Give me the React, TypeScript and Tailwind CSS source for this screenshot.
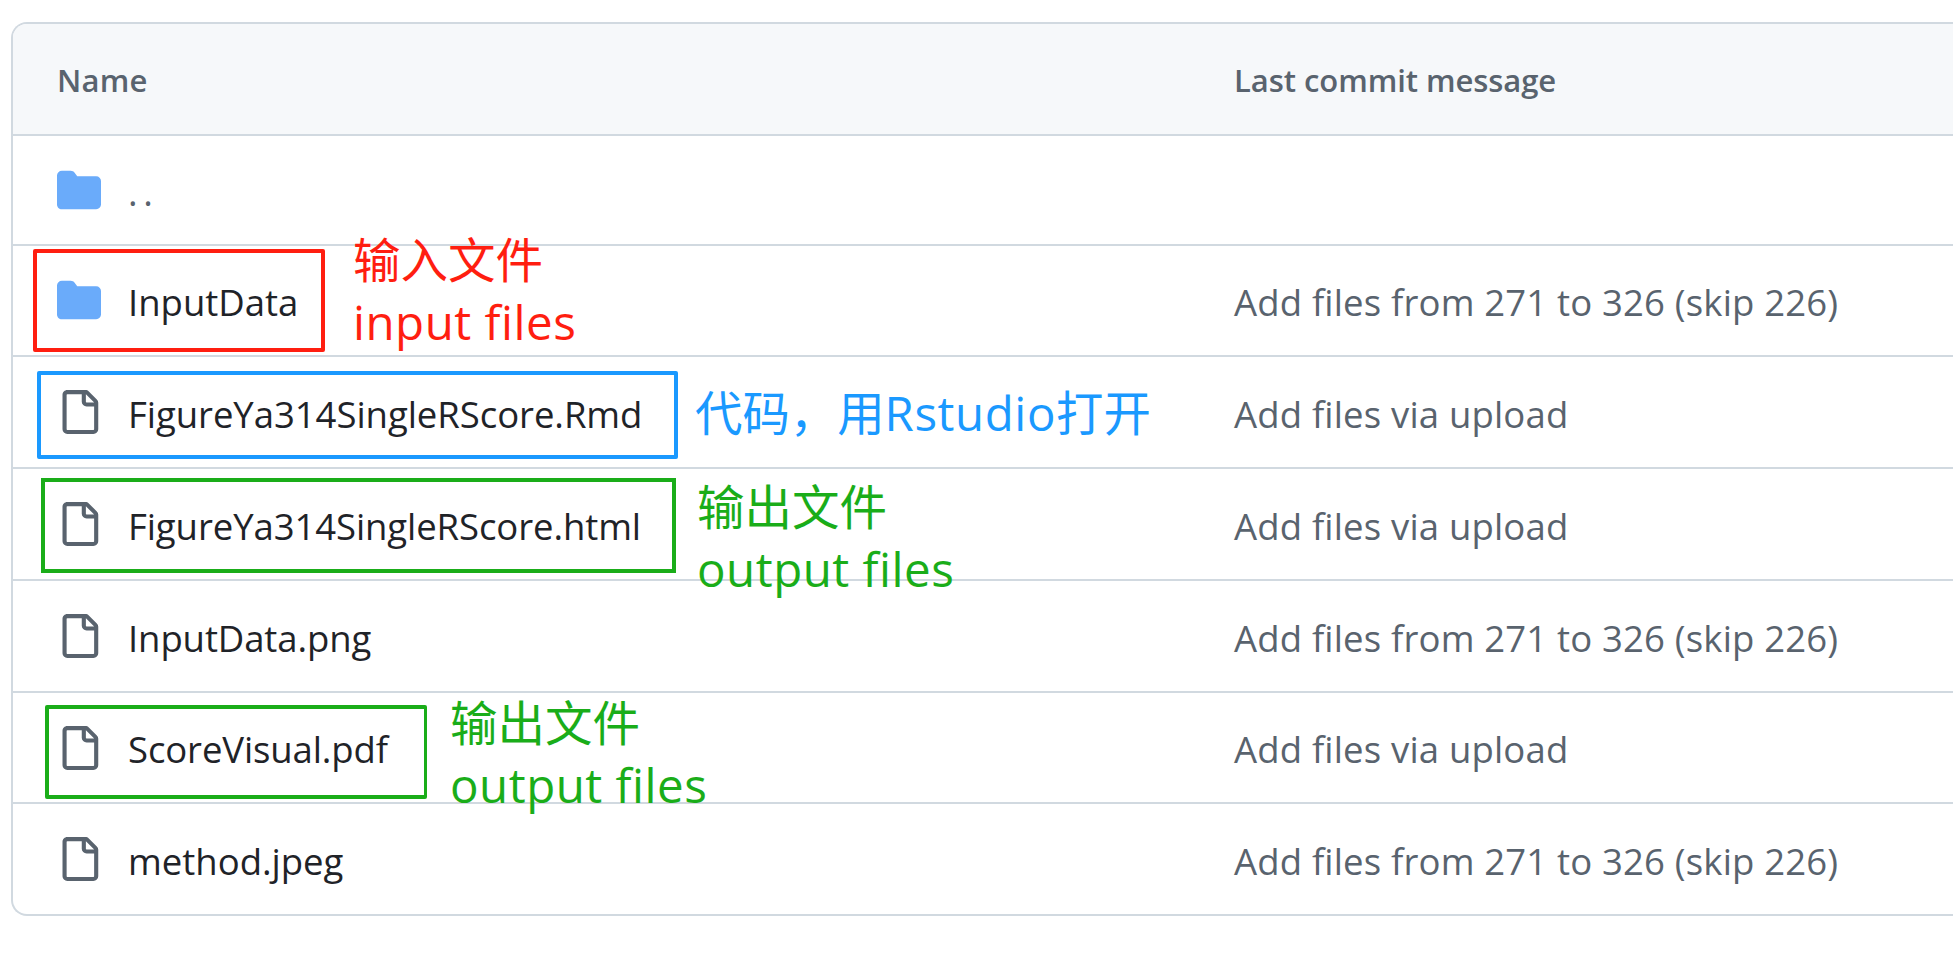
type Row = {
  kind: "folder" | "file";
  name: string;
  message?: string;
  height: string;
  tracking?: string;
  muted?: boolean;
};

const SKIP = "Add files from 271 to 326 (skip 226)";
const UPLOAD = "Add files via upload";

const rows: Row[] = [
  { kind: "folder", name: "..", height: "h-[110px]", tracking: "tracking-[5.7px]", muted: true },
  { kind: "folder", name: "InputData", message: SKIP, height: "h-[111px]" },
  { kind: "file", name: "FigureYa314SingleRScore.Rmd", message: UPLOAD, height: "h-[112px]", tracking: "tracking-[-0.05px]" },
  { kind: "file", name: "FigureYa314SingleRScore.html", message: UPLOAD, height: "h-[112px]", tracking: "tracking-[-0.09px]" },
  { kind: "file", name: "InputData.png", message: SKIP, height: "h-[112px]", tracking: "tracking-[-0.1px]" },
  { kind: "file", name: "ScoreVisual.pdf", message: UPLOAD, height: "h-[111px]", tracking: "tracking-[-0.12px]" },
  { kind: "file", name: "method.jpeg", message: SKIP, height: "h-[110px]" },
];

function FolderIcon() {
  return (
    <svg viewBox="0 0 16 16" className="-mt-px size-11 shrink-0 fill-[#6aabfa]" aria-hidden="true">
      <path d="M1.75 1A1.75 1.75 0 0 0 0 2.75v10.5C0 14.216.784 15 1.75 15h12.5A1.75 1.75 0 0 0 16 13.25v-8.5A1.75 1.75 0 0 0 14.25 3H7.5a.25.25 0 0 1-.2-.1l-.9-1.2C6.07 1.26 5.55 1 5 1H1.75Z" />
    </svg>
  );
}

function FileIcon() {
  return (
    <svg viewBox="0 0 16 16" className="size-11 shrink-0 fill-[#59636e]" aria-hidden="true">
      <path d="M2 1.75C2 .784 2.784 0 3.75 0h6.586c.464 0 .909.184 1.237.513l2.914 2.914c.329.328.513.773.513 1.237v9.586A1.75 1.75 0 0 1 13.25 16h-9.5A1.75 1.75 0 0 1 2 14.25Zm1.75-.25a.25.25 0 0 0-.25.25v12.5c0 .138.112.25.25.25h9.5a.25.25 0 0 0 .25-.25V6h-2.75A1.75 1.75 0 0 1 9 4.25V1.5Zm6.75.062V4.25c0 .138.112.25.25.25h2.688l-.011-.013-2.914-2.914-.013-.011Z" />
    </svg>
  );
}

function FileRow({ row, last }: { row: Row; last: boolean }) {
  return (
    <div className={`grid grid-cols-[1221px_1fr] border-[#d1d9e0] ${row.height} ${last ? "" : "border-b-2"}`}>
      <div className="flex items-center gap-[27px] pl-11">
        {row.kind === "folder" ? <FolderIcon /> : <FileIcon />}
        <span className={`pt-[3px] ${row.muted ? "text-[#59636e]" : "text-[#1f2328]"} ${row.tracking ?? ""}`}>{row.name}</span>
      </div>
      <div className="flex items-center pt-[3px] tracking-[0.17px] text-[#59636e]">{row.message}</div>
    </div>
  );
}

function Note({ place, cjk, latin }: { place: string; cjk: string; latin: string }) {
  return (
    <div className={`absolute text-[47.5px] leading-[62px] whitespace-nowrap ${place}`}>
      <div>{cjk}</div>
      <div className="tracking-[0.5px]">{latin}</div>
    </div>
  );
}

export default function App() {
  return (
    <div className="relative h-[956px] w-full overflow-hidden bg-white pt-[22px] pl-[11px] font-['Open_Sans','Noto_Sans_CJK_SC',sans-serif]">
      <div className="overflow-hidden rounded-l-[16px] border-y-2 border-l-2 border-[#d1d9e0] text-[36.5px] leading-[50px] whitespace-nowrap">
        <div className="grid h-[112px] grid-cols-[1221px_1fr] items-center border-b-2 border-[#d1d9e0] bg-[#f6f8fa] pt-px text-[31px] font-semibold text-[#59636e]">
          <div className="pl-11 tracking-[0.2px]">Name</div>
          <div className="tracking-[-0.06px]">Last commit message</div>
        </div>
        {rows.map((row, i) => (
          <FileRow key={row.name} row={row} last={i === rows.length - 1} />
        ))}
      </div>

      <div className="absolute top-[249px] left-[33px] h-[103px] w-[292px] rounded-[2px] border-4 border-[#ff1e10]" />
      <Note place="top-[229px] left-[353px] text-[#ff1e10]" cjk="输入文件" latin="input files" />

      <div className="absolute top-[371px] left-[37px] h-[88px] w-[641px] rounded-[2px] border-4 border-[#1a99ff]" />
      <div className="absolute top-[382px] left-[695px] text-[47.4px] leading-[62px] whitespace-nowrap text-[#1a99ff]">
        代码，用<span className="tracking-[0.6px]">Rstudio</span>打开
      </div>

      <div className="absolute top-[478px] left-[41px] h-[95px] w-[635px] border-4 border-[#1aad19]" />
      <Note place="top-[476px] left-[697px] text-[#1aad19]" cjk="输出文件" latin="output files" />

      <div className="absolute top-[705px] left-[45px] h-[94px] w-[382px] rounded-[2px] border-4 border-r-3 border-[#1aad19]" />
      <Note place="top-[692px] left-[450px] text-[#1aad19]" cjk="输出文件" latin="output files" />
    </div>
  );
}
